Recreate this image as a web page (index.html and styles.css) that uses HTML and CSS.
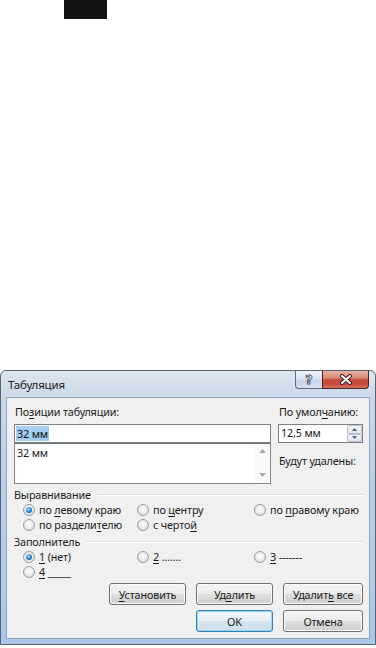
FILE: index.html
```html
<!DOCTYPE html>
<html lang="ru">
<head>
    <meta charset="UTF-8">
    <meta name="viewport" content="width=device-width, initial-scale=1.0">
    <title>Табуляция</title>
    <link rel="stylesheet" href="styles.css">
</head>
<body>
    <div class="top-block"></div>

    <div class="window">
        <div class="titlebar">
            <span class="title">Табуляция</span>
            <div class="caption-buttons">
                <span class="cap help">?</span>
                <span class="cap close">
                    <svg width="14" height="11" viewBox="0 0 14 11">
                        <path d="M3 2 L11 9 M11 2 L3 9" stroke="#3b1f1b" stroke-width="4" stroke-linecap="round"/>
                        <path d="M3 2 L11 9 M11 2 L3 9" stroke="#ffffff" stroke-width="2" stroke-linecap="round"/>
                    </svg>
                </span>
            </div>
        </div>

        <div class="client">
            <div class="top-row">
                <div class="tabs-col">
                    <div class="label">По<u>з</u>иции табуляции:</div>
                    <div class="textbox"><span class="sel">32 мм</span></div>
                    <div class="listbox">
                        <div class="list-items">
                            <div>32 мм</div>
                        </div>
                        <div class="vscroll">
                            <svg width="7" height="4" viewBox="0 0 7 4"><path d="M0 4 L3.5 0 L7 4 Z" fill="#a7a7a7"/></svg>
                            <svg width="7" height="4" viewBox="0 0 7 4"><path d="M0 0 L3.5 4 L7 0 Z" fill="#a7a7a7"/></svg>
                        </div>
                    </div>
                </div>
                <div class="default-col">
                    <div class="label">По умол<u>ч</u>анию:</div>
                    <div class="spinbox">
                        <span class="spin-value">12,5 мм</span>
                        <div class="spin">
                            <span class="spin-btn">
                                <svg width="5" height="3" viewBox="0 0 5 3"><path d="M0 3 L2.5 0 L5 3 Z" fill="#4d6185"/></svg>
                            </span>
                            <span class="spin-btn">
                                <svg width="5" height="3" viewBox="0 0 5 3"><path d="M0 0 L2.5 3 L5 0 Z" fill="#4d6185"/></svg>
                            </span>
                        </div>
                    </div>
                    <div class="label remove">Будут удалены:</div>
                </div>
            </div>

            <div class="group">
                <div class="group-title"><span>Выравнивание</span></div>
                <div class="radios">
                    <div class="radio checked"><span class="circle"></span><span>по <u>л</u>евому краю</span></div>
                    <div class="radio"><span class="circle"></span><span>по <u>ц</u>ентру</span></div>
                    <div class="radio"><span class="circle"></span><span>по <u>п</u>равому краю</span></div>
                    <div class="radio"><span class="circle"></span><span>по раздели<u>т</u>елю</span></div>
                    <div class="radio"><span class="circle"></span><span>с черто<u>й</u></span></div>
                </div>
            </div>

            <div class="group second">
                <div class="group-title"><span>Заполнитель</span></div>
                <div class="radios">
                    <div class="radio checked"><span class="circle"></span><span><u>1</u> (нет)</span></div>
                    <div class="radio"><span class="circle"></span><span><u>2</u> .......</span></div>
                    <div class="radio"><span class="circle"></span><span><u>3</u> -------</span></div>
                    <div class="radio"><span class="circle"></span><span><u>4</u> _____</span></div>
                </div>
            </div>

            <div class="buttons">
                <button type="button" class="btn"><u>У</u>становить</button>
                <button type="button" class="btn">Уд<u>а</u>лить</button>
                <button type="button" class="btn">Удалит<u>ь</u> все</button>
                <button type="button" class="btn default ok">OK</button>
                <button type="button" class="btn">Отмена</button>
            </div>
        </div>
    </div>
</body>
</html>
```

FILE: styles.css
```css
html, body {
    margin: 0;
    padding: 0;
    overflow: hidden;
}
body {
    font-family: "Noto Sans", "Open Sans", sans-serif;
    font-size: 10.8px;
    line-height: 14px;
    letter-spacing: -0.15px;
    color: #1b1b1b;
    background-color: #fff;
}
u {
    text-decoration-thickness: 1px;
    text-underline-offset: 2px;
}
.top-block {
    margin-left: 64px;
    width: 43px;
    height: 19px;
    background-color: #111;
}

/* window frame */
.window {
    margin-top: 351px;
    width: 376px;
    box-sizing: border-box;
    border: 1px solid #56646f;
    border-radius: 6px 6px 0 0;
    padding: 0 5px 5px 5px;
    background: linear-gradient(to bottom, #dde5ee 0, #cbd9ea 26px, #b7cfe9 110px, #a8c8eb 100%);
}
.titlebar {
    display: flex;
    justify-content: space-between;
    align-items: flex-start;
    height: 26px;
}
.title {
    padding: 6px 0 0 2px;
    font-size: 11.5px;
    line-height: 15px;
    color: #1e1e1e;
}
.caption-buttons {
    display: flex;
    margin-right: 1px;
}
.cap {
    display: flex;
    align-items: center;
    justify-content: center;
    height: 18px;
    box-sizing: border-box;
    border: 1px solid #5f6d7f;
    border-top: none;
}
.help {
    width: 27px;
    border-right: none;
    border-radius: 0 0 0 4px;
    background: linear-gradient(to bottom, #eef3f9 0, #dbe5f0 45%, #c7d6e8 55%, #d3e0ee 100%);
    font-family: "DejaVu Sans", sans-serif;
    font-size: 13px;
    font-weight: bold;
    color: #f4f6f9;
    -webkit-text-stroke: 1px #55606e;
}
.close {
    width: 47px;
    border-color: #4d2622;
    border-radius: 0 0 4px 0;
    background: linear-gradient(to bottom, #e8b0a2 0, #d98a78 40%, #c7473a 52%, #c84d3f 80%, #d77a62 100%);
}

/* client area */
.client {
    border: 1px solid #93a6bd;
    background-color: #f0f0f0;
    height: 242px;
    box-sizing: border-box;
    padding: 7px 6px 0 7px;
}
.top-row {
    display: flex;
    gap: 7px;
}
.tabs-col {
    width: 257px;
}
.default-col {
    flex: 1;
}
.label {
    padding-left: 1px;
    margin-bottom: 5px;
}
.label.remove {
    margin-top: 11px;
}
.textbox {
    height: 19px;
    box-sizing: border-box;
    border: 1px solid #7a8089;
    background-color: #fff;
    padding: 1px 0 0 1px;
}
.sel {
    display: inline-block;
    padding: 0 1px;
    line-height: 15px;
    background-color: #a3cdf1;
    color: #0d0d0d;
}
.listbox {
    display: flex;
    height: 41px;
    box-sizing: border-box;
    border: 1px solid #828790;
    border-top-color: #6d737c;
    background-color: #fff;
}
.list-items {
    flex: 1;
    padding: 2px 0 0 2px;
}
.vscroll {
    width: 16px;
    display: flex;
    flex-direction: column;
    justify-content: space-between;
    align-items: center;
    padding: 5px 0 6px 0;
    background-color: #fafafa;
}
.spinbox {
    display: flex;
    height: 19px;
    box-sizing: border-box;
    border: 1px solid #7a8089;
    background-color: #fff;
}
.spin-value {
    flex: 1;
    padding: 1px 0 0 2px;
}
.spin {
    display: flex;
    flex-direction: column;
    width: 15px;
}
.spin-btn {
    flex: 1;
    display: flex;
    align-items: center;
    justify-content: center;
    border: 1px solid #b9c2cc;
    border-radius: 2px;
    background: linear-gradient(to bottom, #f7f8f9, #dfe3e8);
}

/* groups with radio buttons */
.group {
    margin-top: 4px;
}
.group.second {
    margin-top: 3px;
}
.group-title {
    display: flex;
    align-items: center;
    gap: 6px;
}
.group-title::after {
    content: "";
    flex: 1;
    height: 1px;
    background-color: #d8dde2;
    border-bottom: 1px solid #fff;
}
.radios {
    display: grid;
    grid-template-columns: 114px 117px auto;
    padding-left: 9px;
}
.radio {
    display: flex;
    align-items: center;
    gap: 4px;
    height: 15px;
    white-space: nowrap;
}
.circle {
    flex: none;
    width: 12px;
    height: 12px;
    box-sizing: border-box;
    border-radius: 50%;
    border: 1px solid #9a9c9e;
    background: radial-gradient(circle at 50% 40%, #ffffff 0, #eeeeee 45%, #d4d4d4 100%);
    display: flex;
    align-items: center;
    justify-content: center;
}
.radio.checked .circle::after {
    content: "";
    width: 6px;
    height: 6px;
    border-radius: 50%;
    background: radial-gradient(circle at 40% 35%, #a6dcfb 0, #2f84cc 50%, #134a82 100%);
}

/* dialog buttons */
.buttons {
    display: grid;
    grid-template-columns: 77px 77px 80px;
    column-gap: 10px;
    row-gap: 5px;
    justify-content: end;
    margin-top: 4px;
}
.btn {
    height: 22px;
    margin: 0;
    padding: 0;
    font-family: inherit;
    font-size: 10.8px;
    letter-spacing: -0.15px;
    color: #1b1b1b;
    border: 1px solid #707070;
    border-radius: 3px;
    background: linear-gradient(to bottom, #f3f3f3 0, #ebebeb 48%, #dddddd 52%, #cfcfcf 100%);
    box-shadow: inset 0 0 0 1px #fbfbfb;
}
.btn.ok {
    grid-column: 2;
}
.btn.default {
    border-color: #3c7fb1;
    background: linear-gradient(to bottom, #f1f7fb 0, #e6eff5 48%, #d6e5ef 52%, #cfe0ec 100%);
    box-shadow: inset 0 0 0 1px #8ed6f5;
}
```
